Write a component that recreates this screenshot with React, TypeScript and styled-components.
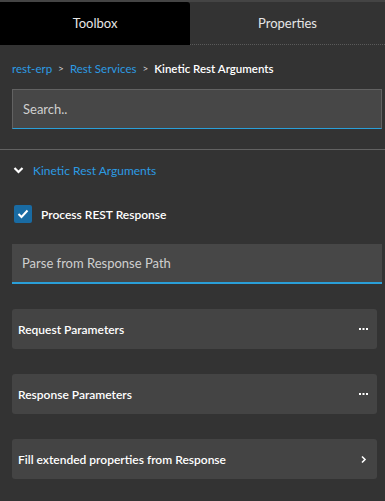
import React from "react";
import styled, { createGlobalStyle } from "styled-components";

const GlobalStyle = createGlobalStyle`
  html, body {
    margin: 0;
    padding: 0;
    background: #333333;
  }
  body {
    font-family: Lato, "Noto Sans", sans-serif;
    color: #ffffff;
  }
`;

const Panel = styled.div`
  width: 385px;
  height: 501px;
  background: #333333;
  border-top: 2px solid #444444;
  box-sizing: border-box;
  overflow: hidden;
`;

const Tabs = styled.div`
  display: grid;
  grid-template-columns: 190px 1fr;
  height: 43px;
`;

const Tab = styled.div<{ $active?: boolean }>`
  display: flex;
  align-items: center;
  justify-content: center;
  font-size: 13px;
  color: #e6e6e6;
  background: ${(p) => (p.$active ? "#000000" : "#333333")};
  border-top-right-radius: ${(p) => (p.$active ? "3px" : "0")};
  border-bottom: ${(p) => (p.$active ? "1px solid #000" : "1px dotted #5a5a5a")};
`;

const Body = styled.div`
  padding: 0 3px 0 12px;
`;

const Crumbs = styled.div`
  display: flex;
  align-items: center;
  gap: 6px;
  height: 16px;
  margin-top: 15px;
  font-size: 11.5px;
`;

const Crumb = styled.span<{ $current?: boolean }>`
  color: ${(p) => (p.$current ? "#ffffff" : "#2c9be3")};
  font-weight: ${(p) => (p.$current ? 600 : 400)};
`;

const Sep = styled.span`
  color: #d0d0d0;
  font-size: 10px;
`;

const SearchBox = styled.div`
  margin-top: 13px;
  height: 40px;
  box-sizing: border-box;
  background: #474747;
  border: 1px solid #626262;
  border-bottom: 1px solid #2a9fd8;
  display: flex;
  align-items: center;
  padding-left: 10px;
  font-size: 13px;
  color: #cfcfcf;
`;

const Divider = styled.div`
  height: 1px;
  background: #626262;
  margin-top: 20px;
`;

const SectionHead = styled.div`
  display: flex;
  align-items: center;
  gap: 9px;
  height: 16px;
  margin-top: 12px;
  padding-left: 1px;
  font-size: 12px;
  color: #2c9be3;
`;

const CheckRow = styled.div`
  display: flex;
  align-items: center;
  gap: 9px;
  margin-top: 27px;
  padding-left: 2px;
  font-size: 12px;
  font-weight: 600;
`;

const Box = styled.div`
  width: 18px;
  height: 18px;
  border-radius: 2px;
  background: #196ba3;
  display: flex;
  align-items: center;
  justify-content: center;
`;

const Field = styled.div`
  margin-top: 21px;
  height: 40px;
  box-sizing: border-box;
  background: #474747;
  border-bottom: 2px solid #2a9fd8;
  display: flex;
  align-items: center;
  padding-left: 10px;
  font-size: 13px;
  color: #cfcfcf;
`;

const Cards = styled.div`
  display: flex;
  flex-direction: column;
  gap: 25px;
  margin-top: 25px;
  margin-right: 5px;
`;

const Card = styled.div`
  height: 40px;
  border-radius: 3px;
  background: #444444;
  display: flex;
  align-items: center;
  justify-content: space-between;
  padding: 0 9px 0 6px;
  font-size: 12px;
  font-weight: 600;
`;

const Dots = () => (
  <svg width="9" height="3" viewBox="0 0 9 3">
    <rect x="0" y="0" width="2" height="2" fill="#fff" />
    <rect x="3.5" y="0" width="2" height="2" fill="#fff" />
    <rect x="7" y="0" width="2" height="2" fill="#fff" />
  </svg>
);

const Down = () => (
  <svg width="11" height="10" viewBox="0 0 11 10">
    <path d="M1.5 3 L5.5 7 L9.5 3" fill="none" stroke="#fff" strokeWidth="2.2" />
  </svg>
);

const Right = () => (
  <svg width="9" height="9" viewBox="0 0 9 9">
    <path d="M3 1.5 L6 4.5 L3 7.5" fill="none" stroke="#fff" strokeWidth="1.6" />
  </svg>
);

export default function App() {
  return (
    <>
      <GlobalStyle />
      <Panel>
        <Tabs>
          <Tab $active>Toolbox</Tab>
          <Tab>Properties</Tab>
        </Tabs>
        <Body>
          <Crumbs>
            <Crumb>rest-erp</Crumb>
            <Sep>&gt;</Sep>
            <Crumb>Rest Services</Crumb>
            <Sep>&gt;</Sep>
            <Crumb $current>Kinetic Rest Arguments</Crumb>
          </Crumbs>
          <SearchBox>Search..</SearchBox>
        </Body>
        <Divider />
        <Body>
          <SectionHead>
            <Down />
            Kinetic Rest Arguments
          </SectionHead>
          <CheckRow>
            <Box>
              <svg width="12" height="10" viewBox="0 0 12 10">
                <path d="M1.5 5 L4.5 8 L10.5 1.5" fill="none" stroke="#fff" strokeWidth="2" />
              </svg>
            </Box>
            Process REST Response
          </CheckRow>
          <Field>Parse from Response Path</Field>
          <Cards>
            <Card>
              Request Parameters
              <Dots />
            </Card>
            <Card>
              Response Parameters
              <Dots />
            </Card>
            <Card>
              Fill extended properties from Response
              <Right />
            </Card>
          </Cards>
        </Body>
      </Panel>
    </>
  );
}
